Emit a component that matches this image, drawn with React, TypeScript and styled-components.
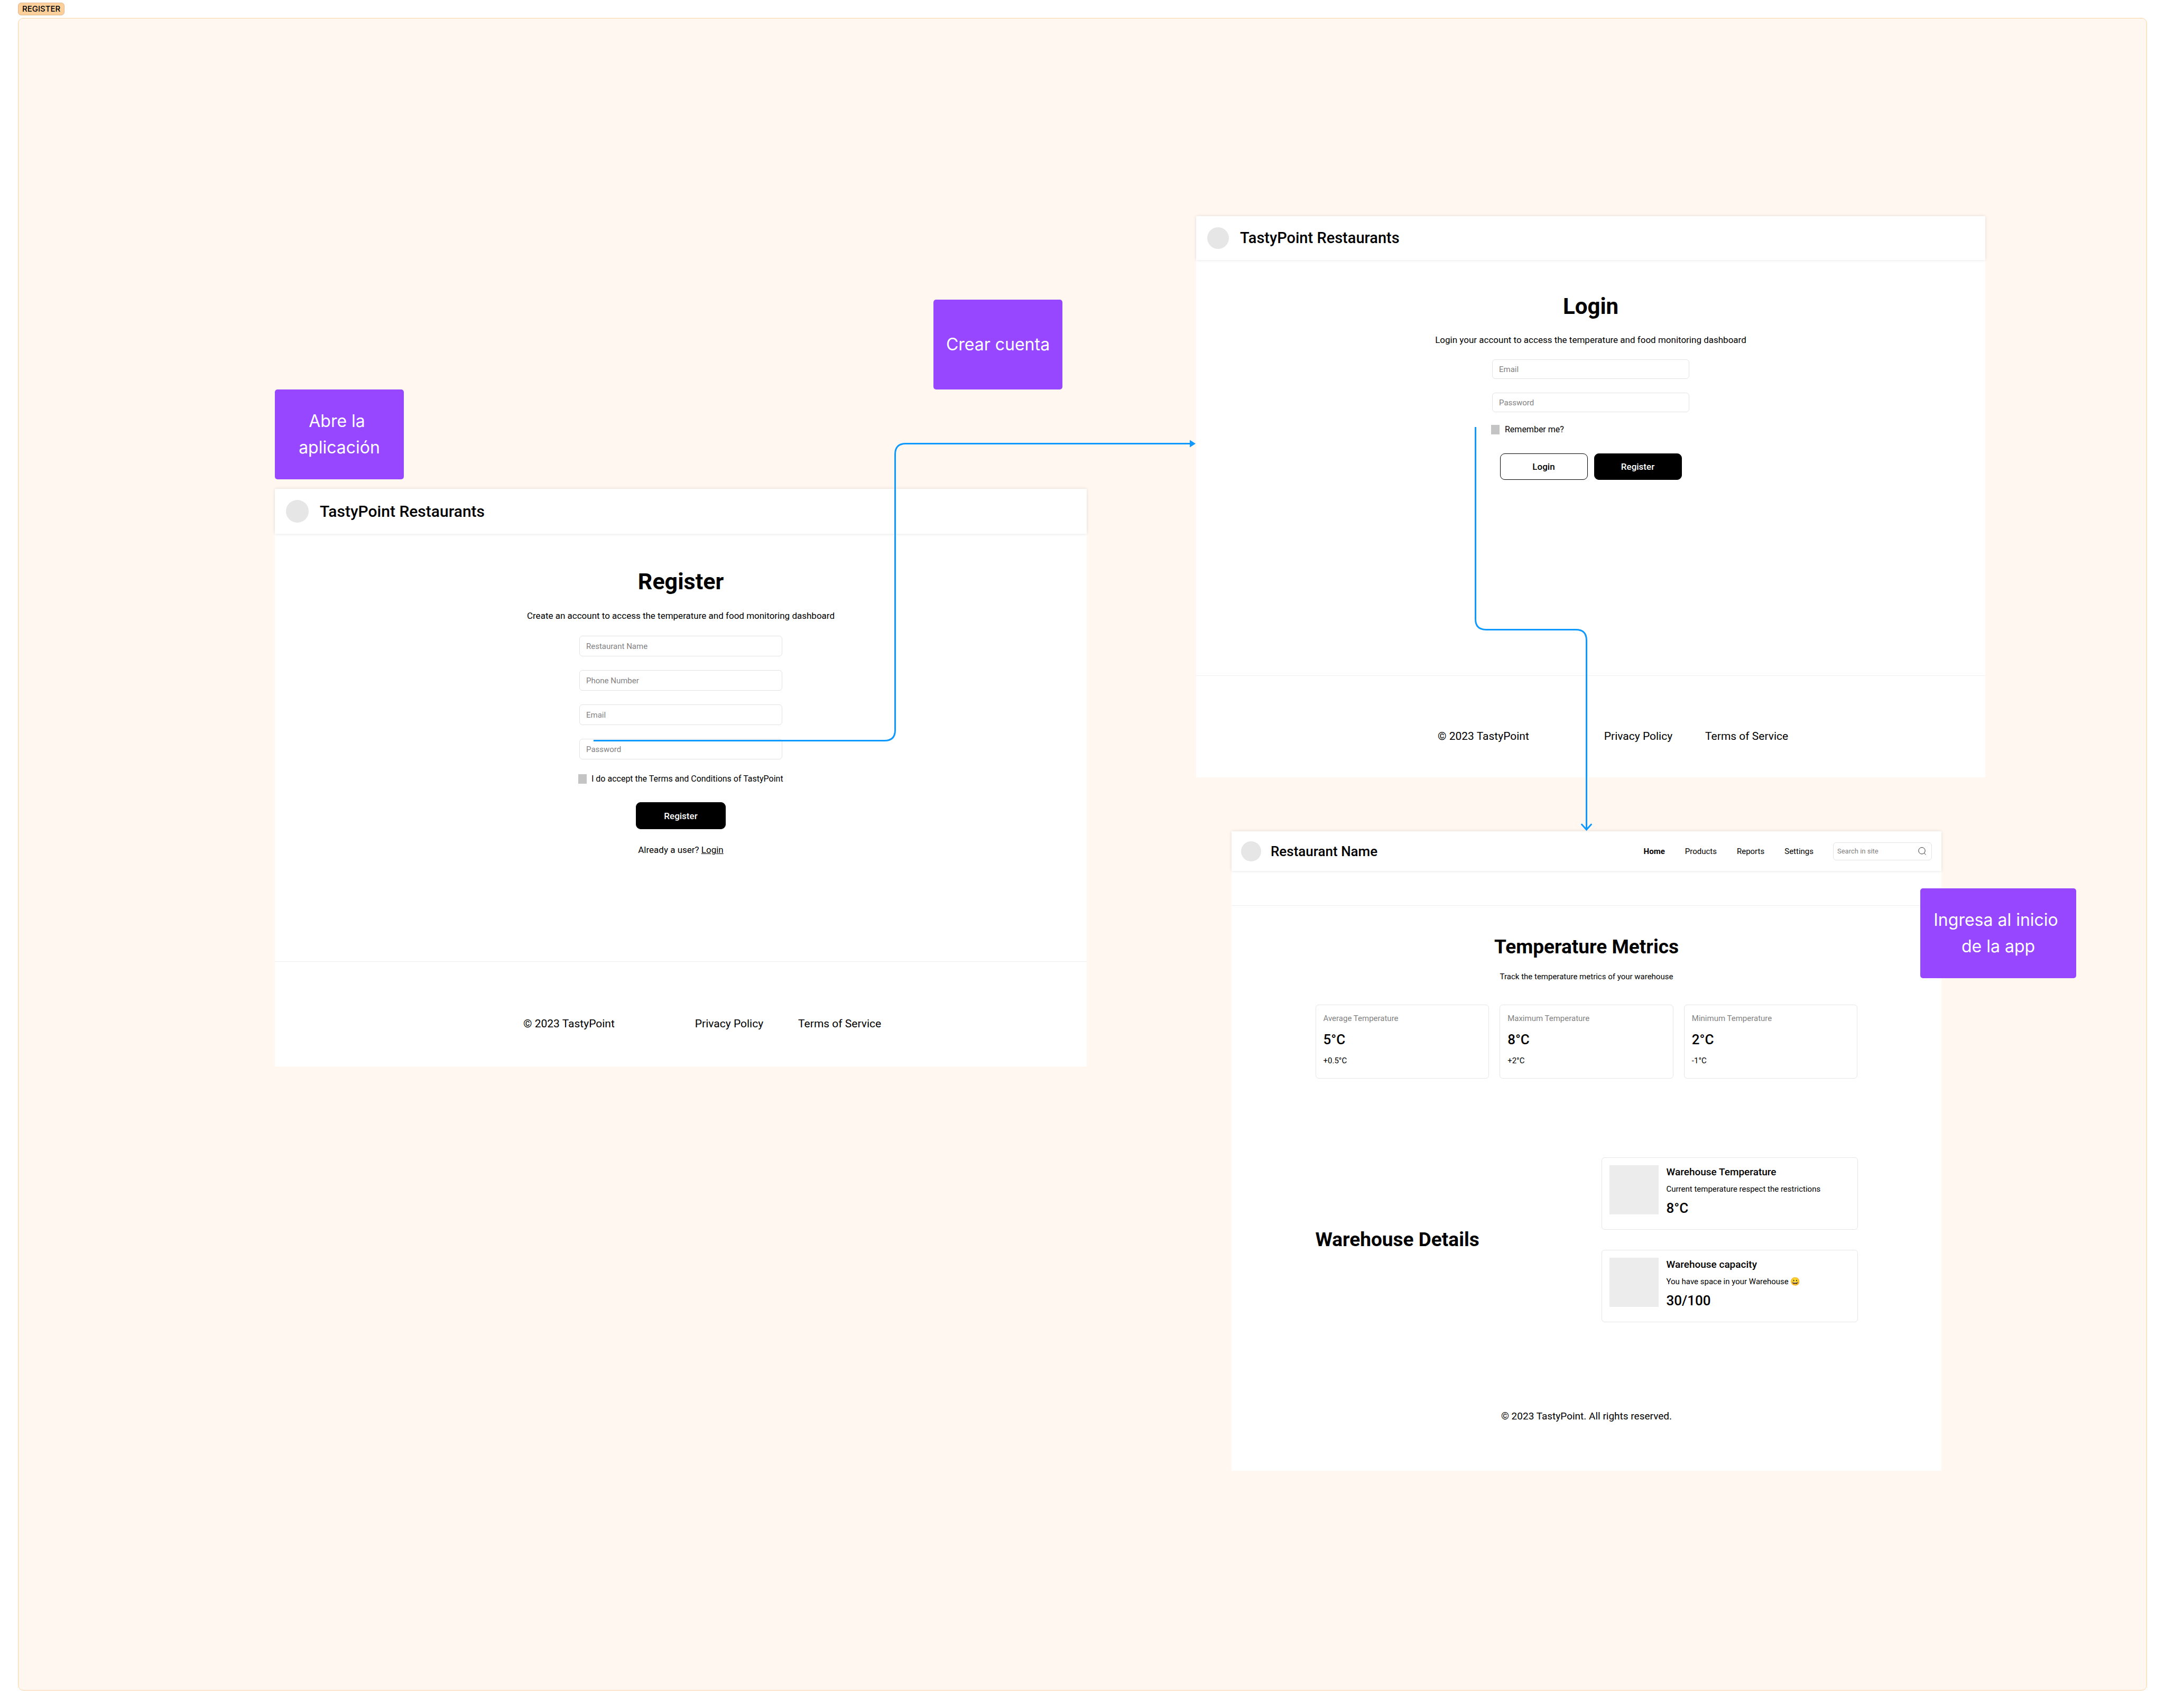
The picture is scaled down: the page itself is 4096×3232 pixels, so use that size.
import React from "react";
import styled, { createGlobalStyle, ThemeProvider } from "styled-components";

/* Each screen on the board is the same design shown at its own scale. */
interface ScreenScale {
  header: number;
  gutter: number;
  avatar: number;
  brand: number;
  title: number;
  titleLine: number;
  titleTop: number;
  titleGap: number;
  body: number;
  bodyLine: number;
  introGap: number;
  formWidth: number;
  field: number;
  fieldGap: number;
  fieldText: number;
  checkTop: number;
  checkGap: number;
  actionsTop: number;
  buttonWidth: number;
  buttonHeight: number;
  footer: number;
  footerTop: number;
  footerLeft: number;
  footerGap: number;
  linkGap: number;
}

declare module "styled-components" {
  export interface DefaultTheme extends ScreenScale {}
}

const registerScale: ScreenScale = {
  header: 85,
  gutter: 21,
  avatar: 43,
  brand: 30,
  title: 43,
  titleLine: 50,
  titleTop: 65,
  titleGap: 27,
  body: 17,
  bodyLine: 26,
  introGap: 25,
  formWidth: 388,
  field: 39,
  fieldGap: 26,
  fieldText: 15,
  checkTop: 24,
  checkGap: 9,
  actionsTop: 31,
  buttonWidth: 170,
  buttonHeight: 51,
  footer: 199,
  footerTop: 101,
  footerLeft: 470,
  footerGap: 152,
  linkGap: 66,
};

const loginScale: ScreenScale = {
  header: 83,
  gutter: 21,
  avatar: 41,
  brand: 29,
  title: 42,
  titleLine: 49,
  titleTop: 63,
  titleGap: 26,
  body: 17,
  bodyLine: 26,
  introGap: 24,
  formWidth: 377,
  field: 37,
  fieldGap: 26,
  fieldText: 15,
  checkTop: 20,
  checkGap: 10,
  actionsTop: 32,
  buttonWidth: 166,
  buttonHeight: 50,
  footer: 193,
  footerTop: 98,
  footerLeft: 457,
  footerGap: 142,
  linkGap: 62,
};

const dashboardScale: ScreenScale = {
  ...loginScale,
  header: 75,
  gutter: 18,
  avatar: 38,
  brand: 26,
  title: 37,
  titleLine: 44,
  titleTop: 56,
  titleGap: 23,
  body: 15,
  bodyLine: 22,
  introGap: 42,
};

const GlobalStyle = createGlobalStyle`
  *, *::before, *::after { box-sizing: border-box; }
  body { margin: 0; background: #fff; }
  h1, h2, h3, p { margin: 0; }
  button, input { font: inherit; color: inherit; margin: 0; }
`;

/* ---------- board ---------- */

const Board = styled.main`
  position: relative;
  display: flex;
  flex-direction: column;
  align-items: flex-start;
  gap: 5px;
  min-height: 100vh;
  padding: 5px 34px 33px;
  color: #000;
  font-family: Roboto, "Liberation Sans", sans-serif;
`;

const BoardTag = styled.h1`
  display: flex;
  align-items: center;
  height: 24px;
  padding: 0 7px;
  border: 1px solid #dfb78a;
  border-radius: 6px;
  background: #fdd09b;
  font: 500 15px/22px Inter, "Liberation Sans", sans-serif;
`;

const BoardSection = styled.section`
  flex: 1;
  align-self: stretch;
  border: 1px solid #fbd3a1;
  border-radius: 10px;
  background: #fff7f0;
`;

interface Spot {
  $x: number;
  $y: number;
  $w: number;
  $h: number;
}

const Note = styled.p<Spot>`
  position: absolute;
  left: ${(p) => p.$x}px;
  top: ${(p) => p.$y}px;
  width: ${(p) => p.$w}px;
  height: ${(p) => p.$h}px;
  display: flex;
  align-items: center;
  justify-content: center;
  border-radius: 5px;
  background: #9747ff;
  color: #fff;
  font: 400 32px/50px Inter, "Liberation Sans", sans-serif;
  text-align: center;
  white-space: pre;
`;

const Screen = styled.article<Spot>`
  position: absolute;
  left: ${(p) => p.$x}px;
  top: ${(p) => p.$y}px;
  width: ${(p) => p.$w}px;
  min-height: ${(p) => p.$h}px;
  display: flex;
  flex-direction: column;
  background: #fff;
`;

const Connectors = styled.svg`
  position: absolute;
  left: 0;
  top: 0;
  width: 100%;
  height: 100%;
  pointer-events: none;
`;

/* ---------- parts shared by the screens ---------- */

const Header = styled.header`
  display: flex;
  align-items: center;
  gap: ${(p) => p.theme.gutter}px;
  height: ${(p) => p.theme.header}px;
  padding: 0 ${(p) => p.theme.gutter}px;
  background: #fff;
  box-shadow: 0 0 6px rgba(0, 0, 0, 0.12);
`;

const Avatar = styled.span`
  flex: none;
  width: ${(p) => p.theme.avatar}px;
  height: ${(p) => p.theme.avatar}px;
  border-radius: 50%;
  background: #e6e6e6;
`;

const Brand = styled.h2`
  margin-right: auto;
  font-size: ${(p) => p.theme.brand}px;
  font-weight: 500;
  line-height: ${(p) => p.theme.titleLine}px;
`;

const Intro = styled.div`
  display: flex;
  flex-direction: column;
  align-items: center;
  gap: ${(p) => p.theme.titleGap}px;
  padding: ${(p) => p.theme.titleTop}px 0 ${(p) => p.theme.introGap}px;
`;

const Title = styled.h3`
  font-size: ${(p) => p.theme.title}px;
  font-weight: 700;
  line-height: ${(p) => p.theme.titleLine}px;
`;

const Body = styled.p`
  font-size: ${(p) => p.theme.body}px;
  line-height: ${(p) => p.theme.bodyLine}px;
`;

/* ---------- register and login ---------- */

const Form = styled.form`
  display: flex;
  flex-direction: column;
  align-self: center;
  width: ${(p) => p.theme.formWidth}px;
`;

const Fields = styled.div`
  display: flex;
  flex-direction: column;
  gap: ${(p) => p.theme.fieldGap}px;
  padding: 0 2px;
`;

const Field = styled.input`
  width: 100%;
  height: ${(p) => p.theme.field}px;
  padding: 0 12px;
  border: 1px solid #e3e3e3;
  border-radius: 6px;
  background: transparent;
  font-size: ${(p) => p.theme.fieldText}px;
  outline: none;

  &::placeholder {
    color: #828282;
    opacity: 1;
  }
`;

const CheckRow = styled.label`
  display: flex;
  align-items: center;
  gap: ${(p) => p.theme.checkGap}px;
  margin-top: ${(p) => p.theme.checkTop}px;
  font-size: 16px;
  line-height: 26px;
`;

const CheckBox = styled.input`
  appearance: none;
  flex: none;
  width: 16px;
  height: 18px;
  background: #c4c4c4;

  &:checked {
    background: #000;
  }
`;

const Actions = styled.div`
  display: flex;
  justify-content: center;
  gap: 12px;
  margin-top: ${(p) => p.theme.actionsTop}px;
`;

const Button = styled.button<{ $outline?: boolean }>`
  width: ${(p) => p.theme.buttonWidth}px;
  height: ${(p) => p.theme.buttonHeight}px;
  padding: 0;
  border: 1px solid #000;
  border-radius: 9px;
  background: ${(p) => (p.$outline ? "#fff" : "#000")};
  color: ${(p) => (p.$outline ? "#000" : "#fff")};
  font-size: ${(p) => p.theme.body}px;
  font-weight: 500;
  cursor: pointer;
`;

const Aside = styled(Body)`
  margin-top: 26px;
  text-align: center;
`;

const InlineLink = styled.a`
  color: inherit;
`;

const AuthFooter = styled.footer`
  display: flex;
  gap: ${(p) => p.theme.footerGap}px;
  height: ${(p) => p.theme.footer}px;
  margin-top: auto;
  padding: ${(p) => p.theme.footerTop}px 0 0 ${(p) => p.theme.footerLeft}px;
  border-top: 1px solid #f0f0f0;
  font-size: 21px;
  line-height: 32px;
`;

const FooterLinks = styled.nav`
  display: flex;
  gap: ${(p) => p.theme.linkGap}px;
`;

const PlainLink = styled.a<{ $current?: boolean }>`
  color: inherit;
  font-weight: ${(p) => (p.$current ? 700 : 400)};
  text-decoration: none;
`;

/* ---------- dashboard ---------- */

const Nav = styled.nav`
  display: flex;
  gap: 38px;
  font-size: 15px;
  line-height: 22px;
`;

const Search = styled.label`
  display: flex;
  align-items: center;
  width: 187px;
  height: 34px;
  margin-left: 19px;
  padding: 0 10px 0 7px;
  border: 1px solid #e3e3e3;
  border-radius: 6px;
`;

const SearchInput = styled.input`
  flex: 1;
  min-width: 0;
  padding: 0;
  border: 0;
  outline: none;
  background: transparent;
  font-size: 13px;
  line-height: 18px;

  &::placeholder {
    color: #828282;
    opacity: 1;
  }
`;

const Band = styled.div`
  height: 66px;
  border-bottom: 1px solid #ededed;
`;

const Content = styled.div`
  width: 1026px;
  align-self: center;
`;

const Metrics = styled.section`
  display: grid;
  grid-template-columns: repeat(3, 1fr);
  gap: 20px;
`;

const MetricCard = styled.div`
  display: flex;
  flex-direction: column;
  gap: 12px;
  padding: 14px 14px 22px;
  border: 1px solid #e6e6e6;
  border-radius: 6px;
`;

const Muted = styled(Body)`
  color: #828282;
`;

const Figure = styled.p`
  font-size: 26px;
  font-weight: 500;
  line-height: 34px;
`;

const Details = styled.section`
  display: flex;
  align-items: center;
  justify-content: space-between;
  margin-top: 149px;
`;

const DetailList = styled.div`
  display: flex;
  flex-direction: column;
  gap: 38px;
  width: 485px;
`;

const DetailCard = styled.div`
  display: flex;
  gap: 15px;
  padding: 14px 14px 23px;
  border: 1px solid #e6e6e6;
  border-radius: 6px;
`;

const Thumb = styled.div`
  flex: none;
  width: 93px;
  height: 93px;
  background: #ececec;
`;

const DetailText = styled.div`
  display: flex;
  flex-direction: column;
  gap: 8px;
`;

const DetailTitle = styled.h3`
  font-size: 19px;
  font-weight: 500;
  line-height: 26px;
`;

const Copyright = styled.footer`
  margin-top: auto;
  padding: 0 0 89px;
  font-size: 19px;
  line-height: 28px;
  text-align: center;
`;

/* ---------- data ---------- */

const registerFields = [
  { label: "Restaurant Name", type: "text" },
  { label: "Phone Number", type: "tel" },
  { label: "Email", type: "email" },
  { label: "Password", type: "password" },
];

const loginFields = registerFields.slice(2);

const metrics = [
  { label: "Average Temperature", value: "5°C", change: "+0.5°C" },
  { label: "Maximum Temperature", value: "8°C", change: "+2°C" },
  { label: "Minimum Temperature", value: "2°C", change: "-1°C" },
];

const details = [
  {
    title: "Warehouse Temperature",
    text: "Current temperature respect the restrictions",
    value: "8°C",
  },
  {
    title: "Warehouse capacity",
    text: "You have space in your Warehouse 😀",
    value: "30/100",
  },
];

function SearchIcon() {
  return (
    <svg width="15" height="15" viewBox="0 0 15 15" fill="none" stroke="#333" aria-hidden="true">
      <circle cx="7" cy="6.8" r="6.2" />
      <path d="M11.4 11.2 14.4 14.2" strokeLinecap="round" />
    </svg>
  );
}

function FieldList({ fields }: { fields: typeof registerFields }) {
  return (
    <Fields>
      {fields.map((f) => (
        <Field key={f.label} type={f.type} placeholder={f.label} aria-label={f.label} />
      ))}
    </Fields>
  );
}

function SiteFooter() {
  return (
    <AuthFooter>
      <span>© 2023 TastyPoint</span>
      <FooterLinks>
        <PlainLink href="#privacy">Privacy Policy</PlainLink>
        <PlainLink href="#terms">Terms of Service</PlainLink>
      </FooterLinks>
    </AuthFooter>
  );
}

function RegisterScreen() {
  return (
    <ThemeProvider theme={registerScale}>
      <Screen $x={520} $y={925} $w={1536} $h={1093}>
        <Header>
          <Avatar />
          <Brand>TastyPoint Restaurants</Brand>
        </Header>
        <Intro>
          <Title>Register</Title>
          <Body>Create an account to access the temperature and food monitoring dashboard</Body>
        </Intro>
        <Form>
          <FieldList fields={registerFields} />
          <CheckRow>
            <CheckBox type="checkbox" />I do accept the Terms and Conditions of TastyPoint
          </CheckRow>
          <Actions>
            <Button type="button">Register</Button>
          </Actions>
          <Aside>
            Already a user? <InlineLink href="#login">Login</InlineLink>
          </Aside>
        </Form>
        <SiteFooter />
      </Screen>
    </ThemeProvider>
  );
}

function LoginScreen() {
  return (
    <ThemeProvider theme={loginScale}>
      <Screen $x={2263} $y={409} $w={1493} $h={1062}>
        <Header>
          <Avatar />
          <Brand>TastyPoint Restaurants</Brand>
        </Header>
        <Intro>
          <Title>Login</Title>
          <Body>Login your account to access the temperature and food monitoring dashboard</Body>
        </Intro>
        <Form>
          <FieldList fields={loginFields} />
          <CheckRow>
            <CheckBox type="checkbox" />
            Remember me?
          </CheckRow>
          <Actions>
            <Button type="button" $outline>
              Login
            </Button>
            <Button type="button">Register</Button>
          </Actions>
        </Form>
        <SiteFooter />
      </Screen>
    </ThemeProvider>
  );
}

function DashboardScreen() {
  return (
    <ThemeProvider theme={dashboardScale}>
      <Screen $x={2330} $y={1573} $w={1343} $h={1210}>
        <Header>
          <Avatar />
          <Brand>Restaurant Name</Brand>
          <Nav>
            <PlainLink href="#home" $current>
              Home
            </PlainLink>
            <PlainLink href="#products">Products</PlainLink>
            <PlainLink href="#reports">Reports</PlainLink>
            <PlainLink href="#settings">Settings</PlainLink>
          </Nav>
          <Search>
            <SearchInput type="search" placeholder="Search in site" aria-label="Search in site" />
            <SearchIcon />
          </Search>
        </Header>
        <Band />
        <Intro>
          <Title>Temperature Metrics</Title>
          <Body>Track the temperature metrics of your warehouse</Body>
        </Intro>
        <Content>
          <Metrics>
            {metrics.map((m) => (
              <MetricCard key={m.label}>
                <Muted>{m.label}</Muted>
                <Figure>{m.value}</Figure>
                <Body>{m.change}</Body>
              </MetricCard>
            ))}
          </Metrics>
          <Details>
            <Title>Warehouse Details</Title>
            <DetailList>
              {details.map((d) => (
                <DetailCard key={d.title}>
                  <Thumb />
                  <DetailText>
                    <DetailTitle>{d.title}</DetailTitle>
                    <Body>{d.text}</Body>
                    <Figure>{d.value}</Figure>
                  </DetailText>
                </DetailCard>
              ))}
            </DetailList>
          </Details>
        </Content>
        <Copyright>© 2023 TastyPoint. All rights reserved.</Copyright>
      </Screen>
    </ThemeProvider>
  );
}

export default function App() {
  return (
    <>
      <GlobalStyle />
      <Board>
        <BoardTag>REGISTER</BoardTag>
        <BoardSection />
        <RegisterScreen />
        <LoginScreen />
        <DashboardScreen />
        <Note $x={520} $y={737} $w={244} $h={170}>
          {"Abre la \naplicación"}
        </Note>
        <Note $x={1766} $y={567} $w={244} $h={170}>
          Crear cuenta
        </Note>
        <Note $x={3633} $y={1681} $w={295} $h={170}>
          {"Ingresa al inicio \nde la app"}
        </Note>
        <Connectors fill="none" stroke="#0d99ff" strokeWidth="3" aria-hidden="true">
          <path d="M1123 1401.5H1673.5Q1693.5 1401.5 1693.5 1381.5V859.5Q1693.5 839.5 1713.5 839.5H2252" />
          <path d="M2251 832.5 2262 839.5 2251 846.5Z" fill="#0d99ff" stroke="none" />
          <path d="M2791.5 808V1171.5Q2791.5 1191.5 2811.5 1191.5H2981.5Q3001.5 1191.5 3001.5 1211.5V1569" />
          <path d="M2992.5 1560 3001.5 1570 3010.5 1560" strokeLinecap="round" />
        </Connectors>
      </Board>
    </>
  );
}
